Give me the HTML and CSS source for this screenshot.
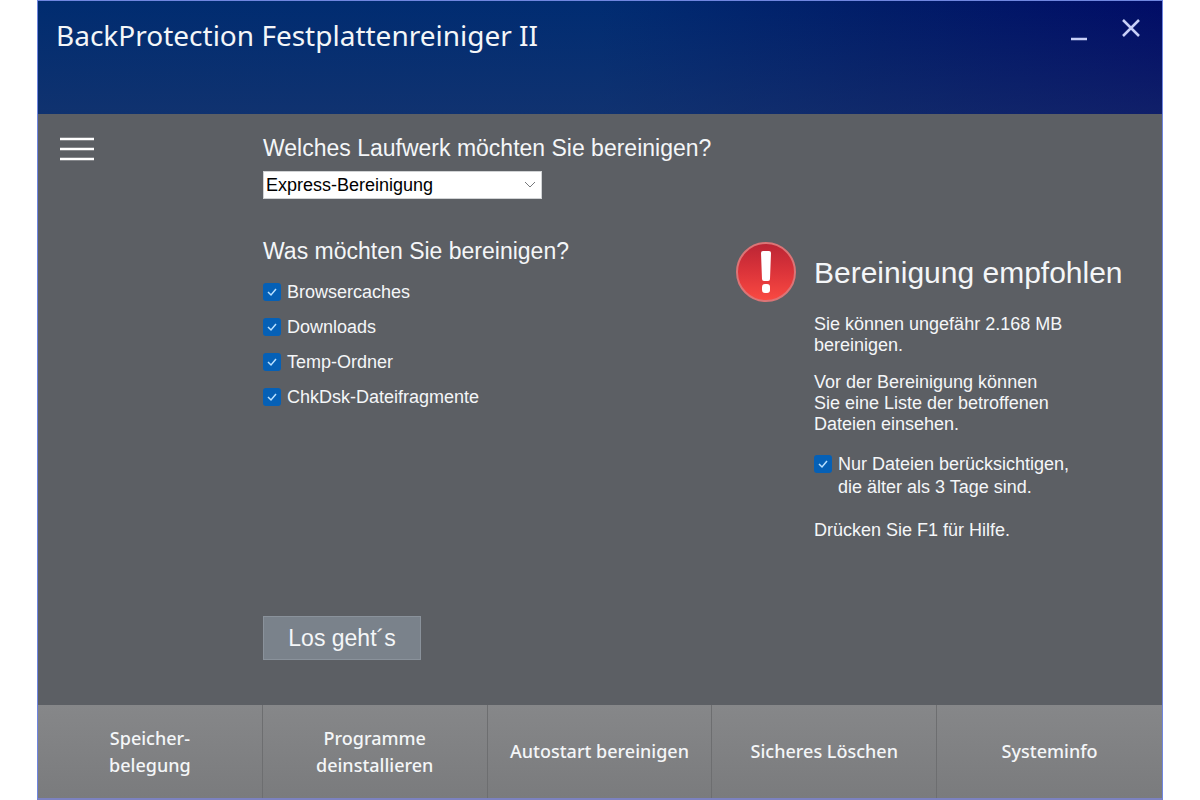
FILE: index.html
```
<!doctype html>
<html lang="de">
  <head>
    <meta charset="utf-8">
    <title>BackProtection Festplattenreiniger II</title>
    <meta name="viewport" content="width=device-width, initial-scale=1.0">
    <link rel="stylesheet" href="styles.css">
  </head>
  <body>
    <div class="window">
      <header class="titlebar">
        <h1>BackProtection Festplattenreiniger II</h1>
        <div class="window-controls">
          <button type="button" aria-label="Minimieren">
            <svg width="22" height="26" viewBox="0 0 22 26">
              <path d="M3 22h16" />
            </svg>
          </button>
          <button type="button" aria-label="Schließen">
            <svg width="22" height="26" viewBox="0 0 22 26">
              <path d="M3 3l16 16M19 3L3 19" />
            </svg>
          </button>
        </div>
      </header>

      <main>
        <nav class="sidebar">
          <button type="button" class="menu" aria-label="Menü">
            <svg width="34" height="26" viewBox="0 0 34 26">
              <path d="M0 3h34M0 13h34M0 23h34" />
            </svg>
          </button>
        </nav>

        <form class="options">
          <label class="question" for="drive">Welches Laufwerk möchten Sie bereinigen?</label>
          <div class="select">
            <select id="drive">
              <option>Express-Bereinigung</option>
            </select>
            <svg width="12" height="8" viewBox="0 0 12 8">
              <path d="M1 1l5 5 5-5" />
            </svg>
          </div>

          <fieldset>
            <legend class="question">Was möchten Sie bereinigen?</legend>
            <label class="check"><input type="checkbox" checked>Browsercaches</label>
            <label class="check"><input type="checkbox" checked>Downloads</label>
            <label class="check"><input type="checkbox" checked>Temp-Ordner</label>
            <label class="check"><input type="checkbox" checked>ChkDsk-Dateifragmente</label>
          </fieldset>

          <button type="submit" class="start">Los geht´s</button>
        </form>

        <section class="status">
          <svg class="alert" width="62" height="62" viewBox="0 0 62 62">
            <defs>
              <linearGradient id="red" x1="0" y1="0" x2="0" y2="1">
                <stop offset="0" stop-color="#ba2434" />
                <stop offset="0.5" stop-color="#dc343a" />
                <stop offset="1" stop-color="#fa4a42" />
              </linearGradient>
            </defs>
            <circle cx="31" cy="31" r="29" fill="url(#red)" stroke="#dc7476" stroke-width="2" />
            <path fill="#fff" d="M28 10h6q2 0 2 2l-1 26q0 2-2 2h-4q-2 0-2-2l-1-26q0-2 2-2z" />
            <rect x="27" y="43" width="8" height="9" rx="3" fill="#fff" />
          </svg>
          <div class="advice">
            <h2>Bereinigung empfohlen</h2>
            <p>Sie können ungefähr 2.168 MB<br>bereinigen.</p>
            <p>Vor der Bereinigung können<br>Sie eine Liste der betroffenen<br>Dateien einsehen.</p>
            <label class="check age">
              <input type="checkbox" checked>
              <span>Nur Dateien berücksichtigen,<br>die älter als 3 Tage sind.</span>
            </label>
            <p>Drücken Sie F1 für Hilfe.</p>
          </div>
        </section>
      </main>

      <footer>
        <button type="button">Speicher-<br>belegung</button>
        <button type="button">Programme<br>deinstallieren</button>
        <button type="button">Autostart bereinigen</button>
        <button type="button">Sicheres Löschen</button>
        <button type="button">Systeminfo</button>
      </footer>
    </div>
  </body>
</html>
```

FILE: styles.css
```
:root {
  --gray: #5c5f64;
  --text: #f4f6f8;
  --blue: #0560b6;
  --border: #6f86e0;
}

* {
  box-sizing: border-box;
}

body {
  margin: 0;
  padding: 0 37px;
  background: white;
  color: var(--text);
  font-family: "Liberation Sans", Arial, sans-serif;
  font-size: 18px;
  line-height: 21px;
}

button {
  border: 0;
  padding: 0;
  background: none;
  color: inherit;
  font: inherit;
}

svg {
  display: block;
  fill: none;
}

.window {
  display: flex;
  flex-direction: column;
  min-height: 100vh;
  border: 1px solid var(--border);
  border-bottom: 2px solid #7c82c0;
  background: var(--gray);
}

.titlebar {
  display: flex;
  justify-content: space-between;
  align-items: flex-start;
  height: 113px;
  padding: 16px 20px 16px 18px;
  background:
    linear-gradient(to bottom, transparent, rgb(40 60 110 / 0.4)),
    linear-gradient(to right, #002c70 0%, #002c72 50%, #001c68 75%, #000c66 100%);
}

h1 {
  margin: 0;
  font-family: "Noto Sans", "Open Sans", sans-serif;
  font-size: 28px;
  font-weight: 400;
  line-height: 36px;
}

.window-controls {
  display: flex;
  gap: 30px;
}

.window-controls svg {
  stroke: #c8d0f8;
  stroke-width: 2.5;
}

main {
  flex: 1;
  display: flex;
}

.sidebar {
  width: 225px;
  padding: 22px;
}

.menu svg {
  stroke: white;
  stroke-width: 2.5;
}

.options {
  flex: 1;
  display: flex;
  flex-direction: column;
  align-items: flex-start;
  padding: 19px 0 45px;
}

.question {
  padding: 0;
  font-size: 23px;
  line-height: 30px;
}

.select {
  display: grid;
  align-items: center;
  width: 279px;
  margin-top: 8px;
}

.select select,
.select svg {
  grid-area: 1 / 1;
}

.select select {
  appearance: none;
  height: 28px;
  padding: 0 2px;
  border: 1px solid #d0d2d4;
  border-radius: 0;
  background: white;
  color: black;
  font: inherit;
}

.select svg {
  justify-self: end;
  margin-right: 6px;
  stroke: #77797c;
  pointer-events: none;
}

fieldset {
  margin: 37px 0 0;
  padding: 0;
  border: 0;
}

legend {
  margin-bottom: 15px;
}

.check {
  display: flex;
  gap: 6px;
  margin-bottom: 12px;
  line-height: 23px;
}

input[type="checkbox"] {
  appearance: none;
  flex: none;
  width: 18px;
  height: 18px;
  margin: 2px 0;
  border-radius: 3px;
  background: var(--blue) url("data:image/svg+xml,%3Csvg xmlns='http://www.w3.org/2000/svg' viewBox='0 0 18 18' fill='none' stroke='%23b8e0ff' stroke-width='1.5'%3E%3Cpath d='M5 9l3 3 5-6'/%3E%3C/svg%3E");
}

.start {
  width: 158px;
  height: 44px;
  margin-top: auto;
  border: 1px solid #8a929b;
  background: #7a828b;
  font-size: 23px;
}

.status {
  display: flex;
  gap: 17px;
  width: 427px;
  padding-top: 127px;
}

.alert {
  flex: none;
}

h2 {
  margin: 14px 0 23px;
  font-size: 30px;
  font-weight: 400;
  line-height: 36px;
}

p {
  margin: 0 0 16px;
}

.age {
  margin: 18px 0 21px;
}

footer {
  display: grid;
  grid-template-columns: repeat(5, 1fr);
  min-height: 93px;
  background: linear-gradient(#868789, #7a7b7d);
}

footer button {
  border-right: 1px solid #6d6e70;
  font-family: "Noto Sans", "Open Sans", sans-serif;
  font-size: 18px;
  font-weight: 500;
  line-height: 27px;
}

footer button:last-child {
  border-right: 0;
}
```
